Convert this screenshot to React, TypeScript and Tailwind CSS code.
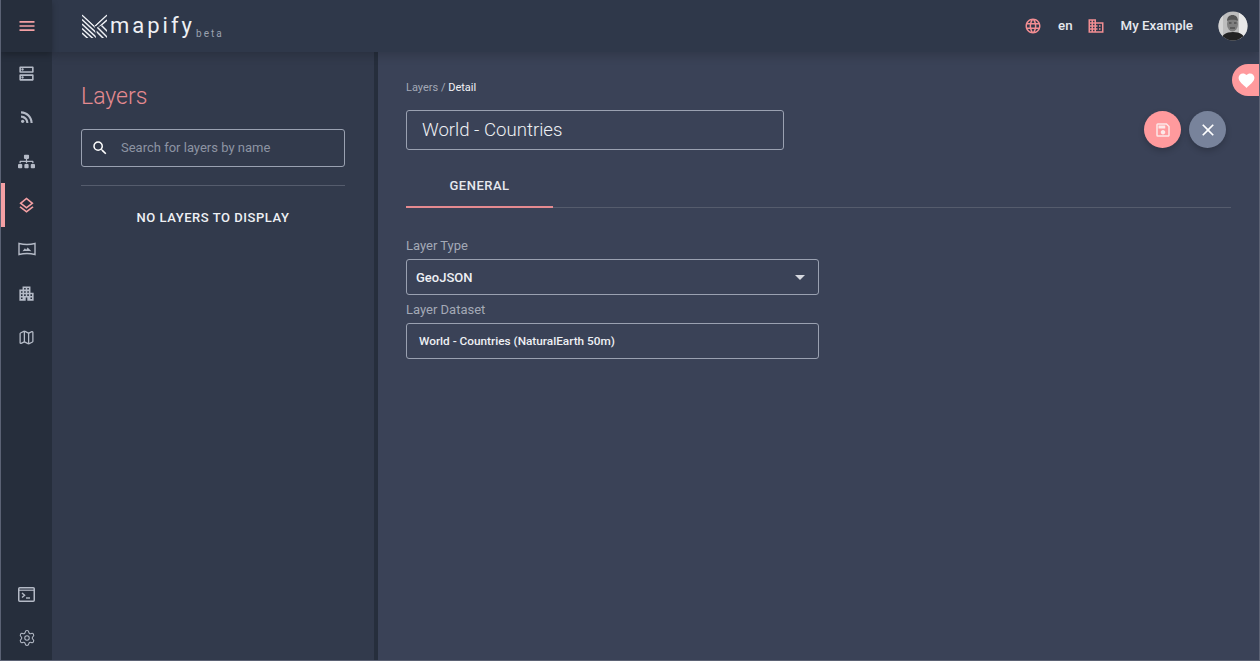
import React from 'react'
import { Map, Settings } from 'lucide-react'
import { FaSitemap } from 'react-icons/fa'
import {
  MdMenu,
  MdOutlineDns,
  MdRssFeed,
  MdOutlineLayers,
  MdApartment,
  MdLanguage,
  MdDomain,
  MdSearch,
  MdFavorite,
  MdOutlineSave,
  MdClose,
} from 'react-icons/md'

// left rail icons
function RailItem({ active, children }: { active?: boolean; children: React.ReactNode }) {
  return (
    <div className="relative flex h-11 w-full items-center justify-center">
      {active && <div className="absolute left-0 top-0 h-11 w-1 bg-[#f4a0a4]" />}
      {children}
    </div>
  )
}

function PanoramaIcon() {
  return (
    <svg width="18" height="14" viewBox="0 0 18 14" fill="none" stroke="#b4bac6" strokeWidth="1.400">
      <path d="M1 1.500c5.300 1.300 10.700 1.300 16 0v11c-5.300-1.300-10.700-1.300-16 0z" />
      <path d="M4.500 9.200l2.400-2.900 1.300 1.500 1.400-2.200 3.800 3.600c-3-.300-5.900-.300-8.900 0z" fill="#b4bac6" stroke="none" />
    </svg>
  )
}

function TerminalIcon() {
  return (
    <svg width="17" height="15" viewBox="0 0 17 15" fill="none" stroke="#b4bac6">
      <rect x="0.750" y="0.750" width="15.500" height="13.500" rx="1" strokeWidth="1.500" />
      <path d="M1 3.200h15" strokeWidth="1.200" />
      <path d="M4 6l2.600 2.300L4 10.600" strokeWidth="1.400" />
      <path d="M8 11h4" strokeWidth="1.400" />
    </svg>
  )
}

function Logo() {
  return (
    <svg width="25" height="24" viewBox="0 0 25 24" fill="none" stroke="#eef0f4" strokeWidth="1.500">
      <defs>
        <clipPath id="logo-left">
          <path d="M0 0L12.500 11.500L14 24H0z" />
        </clipPath>
        <clipPath id="logo-right-top">
          <path d="M25 0L12.500 11.500L15 13.500L25 9z" />
        </clipPath>
        <clipPath id="logo-right-bottom">
          <path d="M15 13.500L25 9V24H14z" />
        </clipPath>
      </defs>
      <g clipPath="url(#logo-left)">
        <path d="M0 1l15 14M0 5.500l15 14M0 10l15 14M0 14.500l11 10M0 19l6 5.500" />
      </g>
      <g clipPath="url(#logo-right-top)">
        <path d="M25 1L12 13M25 6L15 15" />
      </g>
      <g clipPath="url(#logo-right-bottom)">
        <path d="M14 12l12 12M14 17l8 8M19 11l7 7" />
      </g>
    </svg>
  )
}

function Avatar() {
  return (
    <svg width="30" height="30" viewBox="0 0 30 30">
      <defs>
        <clipPath id="avatar-clip">
          <circle cx="15" cy="15" r="14.500" />
        </clipPath>
      </defs>
      <g clipPath="url(#avatar-clip)">
        <rect width="30" height="30" fill="#bdbdbd" />
        <rect x="21" width="9" height="30" fill="#e8e8e8" />
        <rect width="5" height="30" fill="#d4d4d4" />
        <path d="M3 30c0-6 5-9 12-9s12 3 12 9z" fill="#232323" />
        <ellipse cx="14.500" cy="13" rx="5.500" ry="7.500" fill="#7f7f7f" />
        <path d="M9 10c0-4 2.500-6 5.500-6s5.500 2 5.500 6c-2-1.800-9-1.800-11 0z" fill="#555555" />
        <path d="M11 12h2.500M16 12h2.500M12 17h5" stroke="#3a3a3a" strokeWidth="1" />
      </g>
    </svg>
  )
}

function Field({ label, children }: { label: string; children: React.ReactNode }) {
  return (
    <div className="w-[413px]">
      <div className="mb-[6px] text-[13px] leading-[15px] text-[#a3a9b6]">{label}</div>
      {children}
    </div>
  )
}

export default function App() {
  return (
    <div className="flex h-[661px] w-[1260px] overflow-hidden border-x border-b border-[#5b6274] bg-[#3a4257] font-['Roboto',sans-serif]">
      {/* Rail */}
      <div className="z-20 flex h-full w-[51px] shrink-0 flex-col bg-[#262e3c]">
        <div className="flex h-[52px] items-center justify-center bg-[#262e3c] shadow-[0_3px_6px_rgba(0,0,0,0.25)]">
          <MdMenu size={20} color="#f4a0a4" />
        </div>
        <div className="-mt-px flex flex-1 flex-col">
          <RailItem><MdOutlineDns size={19} color="#b4bac6" /></RailItem>
          <RailItem><MdRssFeed size={18} color="#b4bac6" /></RailItem>
          <RailItem><FaSitemap size={17} color="#b4bac6" /></RailItem>
          <RailItem active><MdOutlineLayers size={19} color="#f4a0a4" /></RailItem>
          <RailItem><PanoramaIcon /></RailItem>
          <RailItem><MdApartment size={19} color="#b4bac6" /></RailItem>
          <RailItem><Map size={17} color="#b4bac6" strokeWidth={1.8} /></RailItem>
        </div>
        <div className="flex flex-col">
          <RailItem><TerminalIcon /></RailItem>
          <RailItem><Settings size={18} color="#b4bac6" strokeWidth={1.400} /></RailItem>
        </div>
      </div>

      <div className="flex min-w-0 flex-1 flex-col">
        {/* Header */}
        <header className="z-10 flex h-[52px] shrink-0 items-center bg-[#2f384a] pl-[30px] pr-[11px] shadow-[0_4px_9px_rgba(0,0,0,0.16)]">
          <Logo />
          <span className="ml-[3px] text-[22px] font-normal leading-none tracking-[3px] text-[#eef0f4]">mapify</span>
          <span className="ml-[1px] mt-[16px] text-[10px] leading-none tracking-[2px] text-[#9ba2b0]">beta</span>
          <div className="ml-auto flex items-center">
            <MdLanguage size={18} color="#f28d92" />
            <span className="ml-[16px] text-[13.300px] font-medium text-[#e6e8ee]">en</span>
            <MdDomain size={18} color="#f28d92" className="ml-[14px]" />
            <span className="ml-[16px] text-[13.300px] font-medium text-[#e6e8ee]">My Example</span>
            <div className="ml-[25px]"><Avatar /></div>
          </div>
        </header>

        <div className="flex min-h-0 flex-1">
          {/* Layers panel */}
          <aside className="w-[322px] shrink-0 bg-[#323a4c] px-[29px] pt-[31px]">
            <h2 className="text-[23px] font-light leading-[28px] text-[#e58a90]">Layers</h2>
            <div className="mt-[18px] flex h-[38px] items-center rounded-[3px] border border-[#9aa1b1] px-[9px]">
              <MdSearch size={18} color="#ffffff" />
              <span className="ml-[12px] text-[13px] text-[#8d94a3]">Search for layers by name</span>
            </div>
            <div className="mt-[18px] border-t border-[#555c6d]" />
            <div className="mt-[24px] text-center text-[13px] font-medium leading-[15px] tracking-[0.55px] text-[#eef0f4]">NO LAYERS TO DISPLAY</div>
          </aside>
          <div className="w-1 shrink-0 bg-[#262e3c]" />

          {/* Detail */}
          <main className="relative min-w-0 flex-1 pl-[28px] pr-[28px] pt-[29px]">
            <div className="text-[11px] leading-[14px] text-[#a3a9b6]">Layers / <span className="text-[#f2f3f6]">Detail</span></div>
            <div className="mt-[15px] flex h-10 w-[378px] items-center rounded-[3px] border border-[#9aa1b1] px-[15px] pt-px text-[18.600px] font-light text-[#eef0f4]">World - Countries</div>
            <div className="mt-[15px] border-b border-[#555c6d]">
              <div className="-mb-px flex h-[43px] w-[147px] items-center justify-center border-b-2 border-[#e58a90] pt-px text-[13px] font-medium tracking-[0.5px] text-[#e6e8ee]">GENERAL</div>
            </div>
            <div className="mt-[30px] flex flex-col gap-[7px]">
              <Field label="Layer Type">
                <div className="flex h-[36px] items-center justify-between rounded-[3px] border border-[#9aa1b1] pl-[9px] pr-[13px] pt-px text-[13px] font-medium text-[#eef0f4]">
                  GeoJSON
                  <span className="h-0 w-0 border-x-[5px] border-t-[5px] border-x-transparent border-t-[#d5d8df]" />
                </div>
              </Field>
              <Field label="Layer Dataset">
                <div className="flex h-[36px] items-center rounded-[3px] border border-[#9aa1b1] pl-[12px] pt-px text-[11.800px] font-medium text-[#eef0f4]">World - Countries (NaturalEarth 50m)</div>
              </Field>
            </div>

            {/* Actions */}
            <div className="absolute right-[33px] top-[59px] flex gap-[8px]">
              <button className="flex h-[37px] w-[37px] items-center justify-center rounded-full bg-[#ff9a9d] shadow-[0_3px_6px_rgba(0,0,0,0.2)]">
                <MdOutlineSave size={18} color="#fde8e8" />
              </button>
              <button className="flex h-[37px] w-[37px] items-center justify-center rounded-full bg-[#78839b] shadow-[0_3px_6px_rgba(0,0,0,0.2)]">
                <MdClose size={20} color="#ffffff" />
              </button>
            </div>
            <div className="absolute right-0 top-[12px] flex h-8 w-[27px] items-center justify-center rounded-l-2xl bg-[#ff9a9d] pl-[1px]">
              <MdFavorite size={19} color="#ffffff" />
            </div>
          </main>
        </div>
      </div>
    </div>
  )
}
